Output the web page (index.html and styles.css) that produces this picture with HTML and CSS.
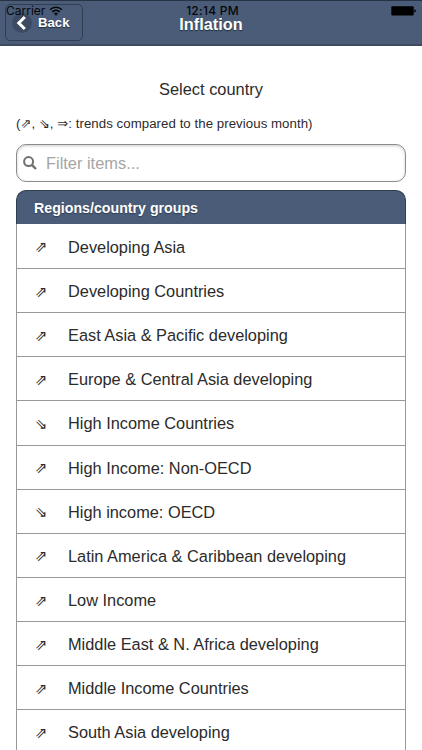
FILE: index.html
```html
<!DOCTYPE html>
<html lang="en">
<head>
<meta charset="utf-8">
<title>Inflation</title>
<link rel="stylesheet" href="styles.css">
</head>
<body>
<header class="header">
  <div class="status">
    <span class="carrier">Carrier
      <svg class="wifi" width="14" height="10" viewBox="0 0 14 10"><path d="M1 3.7a8.6 8.6 0 0 1 12 0M3.2 5.9a5.5 5.5 0 0 1 7.6 0" fill="none" stroke="#050709" stroke-width="1.6"/><path d="M4.9 7.6a3 3 0 0 1 4.2 0L7 9.8z" fill="#050709"/></svg>
    </span>
    <span class="clock">12:14 PM</span>
    <svg class="battery" width="26" height="10" viewBox="0 0 26 10"><rect x="0.3" y="0.3" width="22.4" height="9.2" rx="1" fill="#000"/><path d="M23.3 3.3q1.6.2 1.6 1.6t-1.6 1.6z" fill="#000"/></svg>
  </div>
  <a class="back" href="#">
    <span class="disc"><svg width="18" height="18" viewBox="0 0 18 18"><path d="M11.8 3L5.8 9l6 6" fill="none" stroke="#fff" stroke-width="3"/></svg></span>
    <span>Back</span>
  </a>
  <h1 class="title">Inflation</h1>
</header>
<main class="content">
  <p class="prompt">Select country</p>
  <p class="legend">(<span class="sym">⇗</span>, <span class="sym">⇘</span>, <span class="sym">⇒</span>: trends compared to the previous month)</p>
  <div class="filter">
    <svg width="14" height="14" viewBox="0 0 14 14"><circle cx="5.6" cy="5.6" r="4.5" fill="none" stroke="#707070" stroke-width="2"/><path d="M8.8 8.8L13 13" stroke="#707070" stroke-width="2.4"/></svg>
    <span>Filter items...</span>
  </div>
  <ul class="list">
    <li class="divider">Regions/country groups</li>
    <li class="row"><span class="trend">⇗</span>Developing Asia</li>
    <li class="row"><span class="trend">⇗</span>Developing Countries</li>
    <li class="row"><span class="trend">⇗</span>East Asia &amp; Pacific developing</li>
    <li class="row"><span class="trend">⇗</span>Europe &amp; Central Asia developing</li>
    <li class="row"><span class="trend">⇘</span>High Income Countries</li>
    <li class="row"><span class="trend">⇗</span>High Income: Non-OECD</li>
    <li class="row"><span class="trend">⇘</span>High income: OECD</li>
    <li class="row"><span class="trend">⇗</span>Latin America &amp; Caribbean developing</li>
    <li class="row"><span class="trend">⇗</span>Low Income</li>
    <li class="row"><span class="trend">⇗</span>Middle East &amp; N. Africa developing</li>
    <li class="row"><span class="trend">⇗</span>Middle Income Countries</li>
    <li class="row"><span class="trend">⇗</span>South Asia developing</li>
  </ul>
</main>
</body>
</html>
```
FILE: styles.css
```css
* { box-sizing: border-box; }
body {
  margin: 0;
  height: 750px;
  overflow: hidden;
  background: #fff;
  color: #2b2b2b;
  font-family: "Liberation Sans", Arial, sans-serif;
}
.header {
  position: relative;
  display: flex;
  align-items: flex-start;
  height: 46px;
  background: #4a5c77;
  border-top: 1px solid #263246;
  border-bottom: 2px solid #3d4a60;
}
.status {
  position: absolute;
  inset: 2px 0 auto;
  z-index: 2;
  display: flex;
  justify-content: space-between;
  padding: 0 5px 0 6px;
  height: 15px;
  line-height: 15px;
  color: #050709;
  font-family: Inter, sans-serif;
  font-size: 12px;
}
.carrier { width: 120px; white-space: nowrap; }
.clock {
  position: absolute;
  left: 3px;
  right: 0;
  text-align: center;
  font-weight: 500;
  letter-spacing: .25px;
}
.wifi { vertical-align: -1px; }
.battery { margin-top: 3px; }
.back {
  display: flex;
  align-items: center;
  gap: 6px;
  width: 78px;
  height: 37px;
  margin: 3px 0 0 5px;
  padding-left: 6px;
  border: 1px solid #303e54;
  border-radius: 5px;
  color: #fff;
  font-size: 13.2px;
  font-weight: bold;
  text-decoration: none;
  text-shadow: 0 1px 1px #222c3b;
}
.disc {
  display: flex;
  align-items: center;
  justify-content: center;
  width: 20px;
  height: 20px;
  border-radius: 50%;
  background: #3d4b62;
}
.title {
  flex: 1;
  margin: 12px 83px 0 0;
  text-align: center;
  font-size: 16.3px;
  line-height: 22px;
  color: #fff;
  text-shadow: 0 1px 1px #222c3b;
}
.content { padding: 0 16px; }
.prompt {
  margin: 32px 0 0;
  text-align: center;
  font-size: 16.4px;
  line-height: 22px;
}
.legend {
  margin: 13px 0 0;
  font-size: 13.25px;
  line-height: 22px;
  white-space: nowrap;
  letter-spacing: .05px;
}
.sym { font-family: "DejaVu Sans", sans-serif; font-size: 13px; }
.filter {
  display: flex;
  align-items: center;
  gap: 9px;
  height: 38px;
  margin-top: 9px;
  padding-left: 6px;
  border: 1px solid #8c8c8c;
  border-radius: 10px;
  box-shadow: inset 0 1px 3px rgba(0, 0, 0, .2);
  color: #a5a5a5;
  font-size: 16.4px;
}
.list {
  margin: 8px 0 0;
  padding: 0;
  list-style: none;
}
.divider {
  height: 34px;
  padding-left: 17px;
  border: 1px solid #303e54;
  border-bottom: 0;
  border-radius: 10px 10px 0 0;
  background: #4a5c77;
  color: #fff;
  font-size: 14.2px;
  font-weight: bold;
  line-height: 34px;
  text-shadow: 0 1px 1px #303e54;
}
.row {
  display: flex;
  align-items: center;
  height: 44.15px;
  padding: 2px 0 0 18px;
  border: 1px solid #999;
  border-top: 0;
  font-size: 16.35px;
}
.divider + .row { height: 45px; }
.trend {
  width: 33px;
  font-family: "DejaVu Sans", sans-serif;
  font-size: 15px;
}
```
